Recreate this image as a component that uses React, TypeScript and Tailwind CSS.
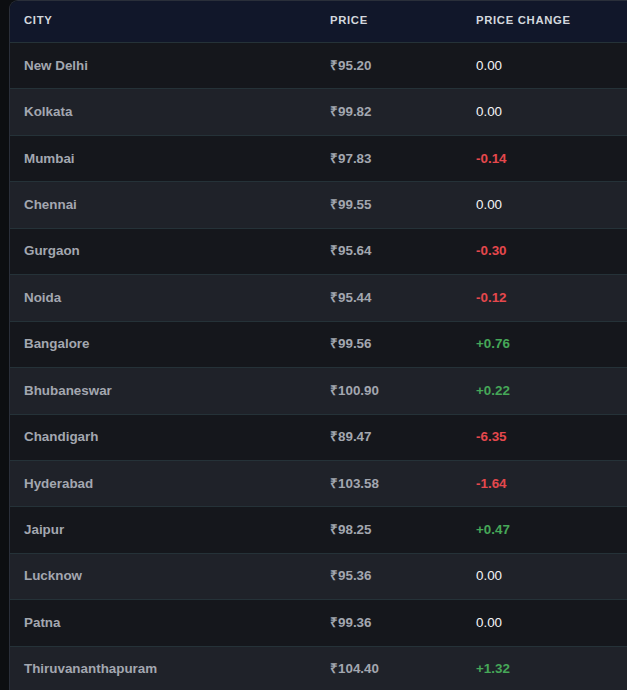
const rows: [string, string, string][] = [
  ['New Delhi', '₹95.20', '0.00'],
  ['Kolkata', '₹99.82', '0.00'],
  ['Mumbai', '₹97.83', '-0.14'],
  ['Chennai', '₹99.55', '0.00'],
  ['Gurgaon', '₹95.64', '-0.30'],
  ['Noida', '₹95.44', '-0.12'],
  ['Bangalore', '₹99.56', '+0.76'],
  ['Bhubaneswar', '₹100.90', '+0.22'],
  ['Chandigarh', '₹89.47', '-6.35'],
  ['Hyderabad', '₹103.58', '-1.64'],
  ['Jaipur', '₹98.25', '+0.47'],
  ['Lucknow', '₹95.36', '0.00'],
  ['Patna', '₹99.36', '0.00'],
  ['Thiruvananthapuram', '₹104.40', '+1.32'],
];

const changeClass = (v: string) => {
  if (v.startsWith('-')) return 'font-bold text-[#e5484d]';
  if (v.startsWith('+')) return 'font-bold text-[#46a758]';
  return 'text-[#f3f4f6]';
};

export default function App() {
  return (
    <div
      className="h-[690px] overflow-hidden bg-[#0c0e11] pl-[9px]"
      style={{ fontFamily: '"Liberation Sans", Arial, sans-serif' }}
    >
      <div className="overflow-hidden rounded-tl-[9px] border-l border-t border-[#2a2f3a]">
        <div className="grid h-[41px] grid-cols-[306px_146px_1fr] items-center bg-[#11172a] pb-[3px] pl-[14px] text-[11.3px] font-bold uppercase tracking-[0.06em] text-[#d4d7de]">
          <div>City</div>
          <div>Price</div>
          <div>Price Change</div>
        </div>
        {rows.map(([city, price, change], i) => (
          <div
            key={city}
            className={`grid h-[46.45px] grid-cols-[306px_146px_1fr] items-center border-t border-[#253238] pl-[14px] text-[13.4px] ${
              i % 2 === 0 ? 'bg-[#15171c]' : 'bg-[#1f2229]'
            }`}
          >
            <div className="font-bold text-[#a3a7b0]">{city}</div>
            <div className="font-bold text-[#a3a7b0]">{price}</div>
            <div className={changeClass(change)}>{change}</div>
          </div>
        ))}
      </div>
    </div>
  );
}
